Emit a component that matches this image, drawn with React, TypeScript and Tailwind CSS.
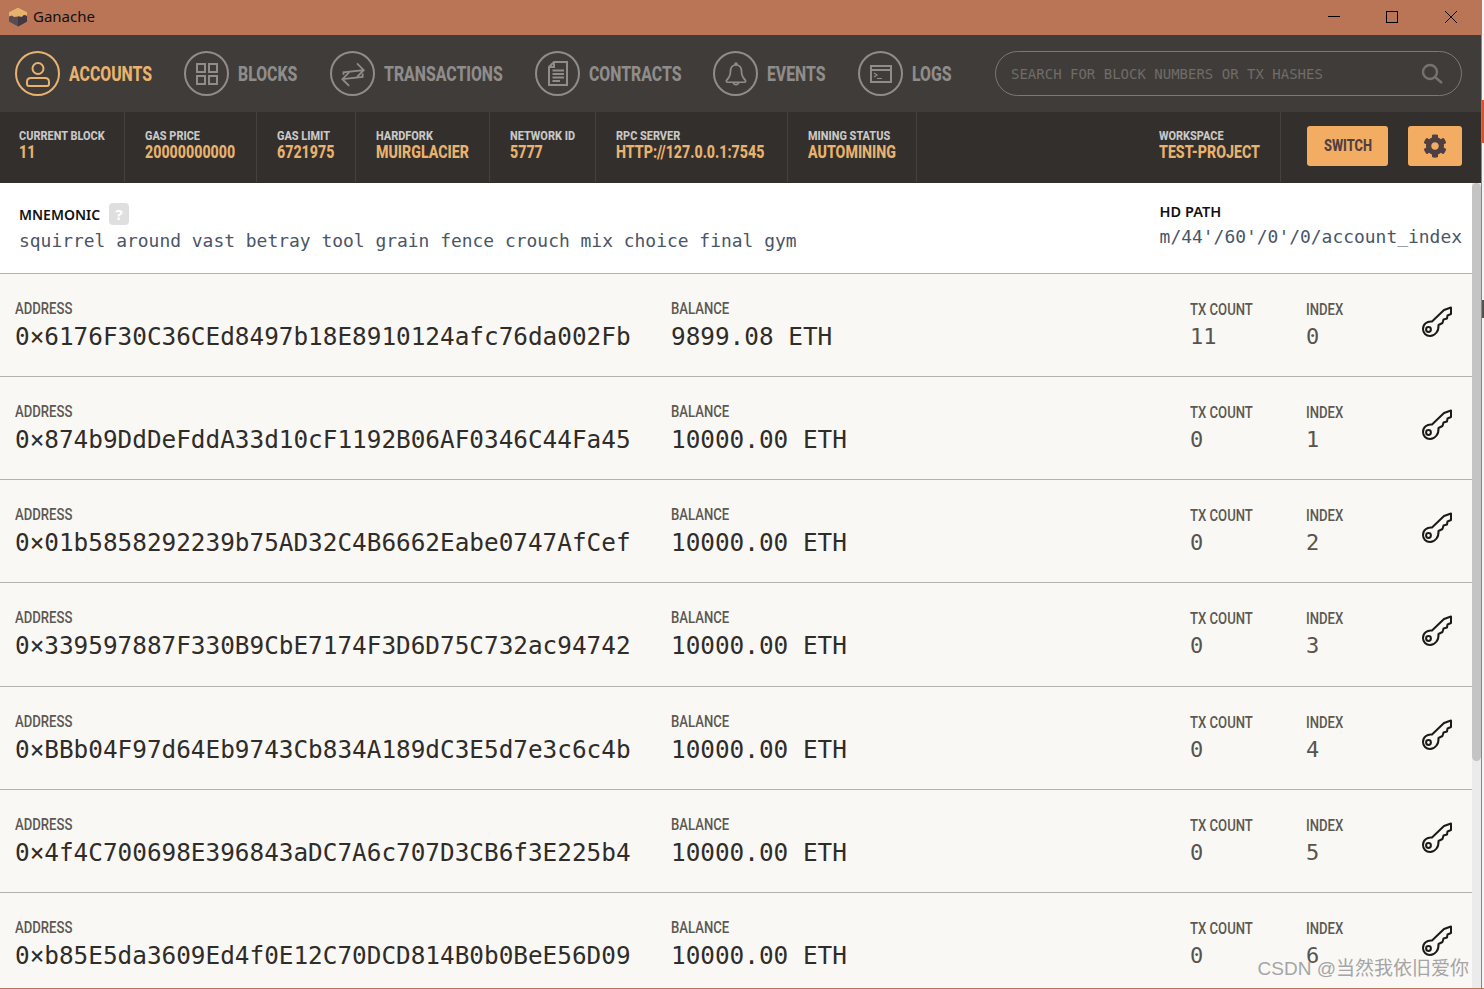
import { FaCog } from "react-icons/fa";

const accounts = [
  { address: "0×6176F30C36CEd8497b18E8910124afc76da002Fb", balance: "9899.08", tx: "11", index: "0" },
  { address: "0×874b9DdDeFddA33d10cF1192B06AF0346C44Fa45", balance: "10000.00", tx: "0", index: "1" },
  { address: "0×01b5858292239b75AD32C4B6662Eabe0747AfCef", balance: "10000.00", tx: "0", index: "2" },
  { address: "0×339597887F330B9CbE7174F3D6D75C732ac94742", balance: "10000.00", tx: "0", index: "3" },
  { address: "0×BBb04F97d64Eb9743Cb834A189dC3E5d7e3c6c4b", balance: "10000.00", tx: "0", index: "4" },
  { address: "0×4f4C700698E396843aDC7A6c707D3CB6f3E225b4", balance: "10000.00", tx: "0", index: "5" },
  { address: "0×b85E5da3609Ed4f0E12C70DCD814B0b0BeE56D09", balance: "10000.00", tx: "0", index: "6" },
];

function UserIcon() {
  return (
    <svg width="24" height="26" viewBox="0 0 24 26" fill="none" stroke="currentColor" strokeWidth="2">
      <circle cx="12" cy="7.5" r="5.5" />
      <path d="M3 25 H21 Q23 25 23 23 V21 Q23 17 19 17 H5 Q1 17 1 21 V23 Q1 25 3 25 Z" />
    </svg>
  );
}

function BlocksIcon() {
  return (
    <svg width="22" height="22" viewBox="0 0 22 22" fill="none" stroke="currentColor" strokeWidth="2">
      <path d="M1 1 H9 V9 H1 Z M13 1 H21 V9 H13 Z M1 13 H9 V21 H1 Z M13 13 H21 V21 H13 Z" />
    </svg>
  );
}

function ArrowsIcon() {
  return (
    <svg width="27" height="27" viewBox="0 0 24 24" fill="none" stroke="currentColor" strokeWidth="1.6">
      <path d="M4 13 V11 L22 9 M16 3 L22 9 L16 15" />
      <path d="M21 12 V15 L3 17 M9 11 L3 17 L9 23" />
    </svg>
  );
}

function ContractIcon() {
  return (
    <svg width="20" height="25" viewBox="0 0 20 25" fill="none" stroke="currentColor" strokeWidth="2">
      <path d="M6 1 H19 V24 H1 V6 Z M1 6 H6 V1" />
      <path d="M4.5 9.5 H16 M4.5 13 H16 M4.5 16.5 H16 M4.5 20 H12" />
    </svg>
  );
}

function BellIcon() {
  return (
    <svg width="22" height="24" viewBox="0 0 24 26" fill="none" stroke="currentColor" strokeWidth="1.9" strokeLinejoin="round">
      <path d="M12 3 C7.5 3 6 7 6 10 C6 15 4.5 17 2 19.5 C1 21 1.5 22 3 22 H21 C22.5 22 23 21 22 19.5 C19.5 17 18 15 18 10 C18 7 16.5 3 12 3 Z" />
      <circle cx="12" cy="2" r="1" fill="currentColor" />
      <path d="M9 22 C9.5 25.5 14.5 25.5 15 22" />
    </svg>
  );
}

function LogIcon() {
  return (
    <svg width="24" height="20" viewBox="0 0 24 20" fill="none" stroke="currentColor" strokeWidth="2">
      <path d="M2 2 H22 V18 H2 Z M2 6 H22" />
      <path d="M5 9 L8 11 L5 13 M8 14.5 H13" strokeWidth="1.2" />
    </svg>
  );
}

function SearchIcon() {
  return (
    <svg width="22" height="22" viewBox="0 0 22 22" fill="none" stroke="#75726f" strokeWidth="2.4">
      <circle cx="9" cy="9" r="7" />
      <path d="M14 14 L21 20" />
    </svg>
  );
}

function KeyIcon() {
  return (
    <svg width="32" height="32" viewBox="0 0 32 32" fill="none" stroke="#1c1a18" strokeWidth="2" strokeLinejoin="round">
      <path d="M11 15.5 L23 4 L30 1.5 V8 L26.5 9.5 L26 12.5 L22.5 13.5 L21.5 17 L17.5 19 C18 25 14 30 9 30 C5 30 2 27 2 23 C2 18 6 15 11 15.5 Z" />
      <circle cx="7.5" cy="23.5" r="2.4" />
    </svg>
  );
}

function GanacheLogo() {
  return (
    <svg width="20" height="20" viewBox="0 0 20 20">
      <path d="M1 5 L10 0.5 L19 5 V14.5 L10 19.5 L1 14.5 Z" fill="#5a4a52" />
      <path d="M1 5 L10 0.5 L19 5 V9 L16 8 L14 10 L10 9.5 L6 10 L4 8.5 L1 9.5 Z" fill="#e9b26c" />
      <path d="M10 9.5 V19.5 L19 14.5 V9 L16 8 L14 10 Z" fill="#43383f" />
    </svg>
  );
}

function NavItem({ label, icon, active, width }: { label: string; icon: React.ReactNode; active?: boolean; width: string }) {
  return (
    <div className={`flex items-center gap-[9px] ${width} ${active ? "text-[#e9b26f]" : "text-[#8f8d8b]"}`}>
      <div className={`flex h-[45px] w-[45px] shrink-0 items-center justify-center rounded-full border-2 ${active ? "border-[#e9b26f]" : "border-[#8f8d8b]"}`}>
        {icon}
      </div>
      <span className="origin-left scale-x-[0.79] text-[20px] font-extrabold whitespace-nowrap [font-family:Roboto,sans-serif]">{label}</span>
    </div>
  );
}

function Stat({ label, value, width }: { label: string; value: string; width: string }) {
  return (
    <div className={`flex h-[70px] flex-col justify-center border-r border-[#45413e] pb-[4px] pl-[20px] ${width}`}>
      <div className="origin-left scale-x-[0.84] text-[13px] leading-[14px] font-extrabold whitespace-nowrap text-[#c9c8c6] [font-family:Roboto,sans-serif]">{label}</div>
      <div className="origin-left scale-x-[0.79] text-[18px] leading-[18px] font-extrabold whitespace-nowrap text-[#e9b26f] [font-family:Roboto,sans-serif]">{value}</div>
    </div>
  );
}

function Label({ children }: { children: React.ReactNode }) {
  return <div className="origin-left scale-x-[0.82] text-[16px] leading-[18px] font-medium whitespace-nowrap text-[#5c5852] [font-family:Roboto,sans-serif]">{children}</div>;
}

function AccountRow({ a }: { a: (typeof accounts)[number] }) {
  return (
    <div className="flex h-[103.15px] shrink-0 items-start border-b border-[#b5b3b0] bg-[#f9f8f5] pt-[26px] pl-[15px]">
      <div className="w-[656px]">
        <Label>ADDRESS</Label>
        <div className="mt-[4px] text-[24.35px] leading-[30px] whitespace-nowrap text-[#2f2c29] [font-family:'DejaVu_Sans_Mono',monospace]">{a.address}</div>
      </div>
      <div className="w-[519px]">
        <Label>BALANCE</Label>
        <div className="mt-[4px] text-[24.35px] leading-[30px] whitespace-nowrap text-[#2f2c29] [font-family:'DejaVu_Sans_Mono',monospace]">{a.balance} ETH</div>
      </div>
      <div className="w-[116px] pt-[1px]">
        <Label>TX COUNT</Label>
        <div className="mt-[4px] text-[22px] leading-[28px] text-[#57534e] [font-family:'DejaVu_Sans_Mono',monospace]">{a.tx}</div>
      </div>
      <div className="w-[116px] pt-[1px]">
        <Label>INDEX</Label>
        <div className="mt-[4px] text-[22px] leading-[28px] text-[#57534e] [font-family:'DejaVu_Sans_Mono',monospace]">{a.index}</div>
      </div>
      <div className="-ml-[1px] pt-[6px]">
        <KeyIcon />
      </div>
    </div>
  );
}

export default function App() {
  return (
    <div className="relative flex h-[989px] w-[1484px] flex-col overflow-hidden bg-white">
      {/* title bar */}
      <div className="flex h-[35px] shrink-0 items-center bg-[#b97556] pb-[2px] pl-[8px]">
        <GanacheLogo />
        <span className="ml-[5px] text-[15px] text-[#111] [font-family:'Noto_Sans',sans-serif]">Ganache</span>
        <div className="ml-auto flex items-center pr-[27px] text-black">
          <div className="h-px w-[12px] bg-black" />
          <div className="ml-[46px] h-[12px] w-[12px] border border-black" />
          <svg className="ml-[47px]" width="12" height="12" viewBox="0 0 12 12" stroke="black" strokeWidth="1"><path d="M0 0 L12 12 M12 0 L0 12" /></svg>
        </div>
      </div>

      {/* nav */}
      <div className="flex h-[77px] shrink-0 items-center bg-[#403c39] pr-[22px] pl-[15px]">
        <NavItem active width="w-[169px]" label="ACCOUNTS" icon={<UserIcon />} />
        <NavItem width="w-[146px]" label="BLOCKS" icon={<BlocksIcon />} />
        <NavItem width="w-[205px]" label="TRANSACTIONS" icon={<ArrowsIcon />} />
        <NavItem width="w-[178px]" label="CONTRACTS" icon={<ContractIcon />} />
        <NavItem width="w-[145px]" label="EVENTS" icon={<BellIcon />} />
        <NavItem width="w-[137px]" label="LOGS" icon={<LogIcon />} />
        <div className="flex h-[45px] w-[467px] items-center justify-between rounded-full border border-[#7b7875] pr-[18px] pl-[15px]">
          <span className="pt-[1px] text-[14px] whitespace-nowrap text-[#6f6c69] [font-family:'DejaVu_Sans_Mono',monospace]">SEARCH FOR BLOCK NUMBERS OR TX HASHES</span>
          <SearchIcon />
        </div>
      </div>

      {/* stats */}
      <div className="flex h-[71px] shrink-0 bg-[#332f2c]">
        <Stat width="w-[125px] !pl-[19px]" label="CURRENT BLOCK" value="11" />
        <Stat width="w-[132px]" label="GAS PRICE" value="20000000000" />
        <Stat width="w-[99px]" label="GAS LIMIT" value="6721975" />
        <Stat width="w-[134px]" label="HARDFORK" value="MUIRGLACIER" />
        <Stat width="w-[106px]" label="NETWORK ID" value="5777" />
        <Stat width="w-[192px]" label="RPC SERVER" value="HTTP://127.0.0.1:7545" />
        <Stat width="w-[129px]" label="MINING STATUS" value="AUTOMINING" />
        <div className="flex-1" />
        <Stat width="w-[142px]" label="WORKSPACE" value="TEST-PROJECT" />
        <div className="flex items-center pr-[22px] pb-[3px] pl-[26px]">
          <div className="flex h-[40px] w-[81px] items-center justify-center rounded-[3px] bg-[#f2ad63] text-[16px] font-extrabold text-[#4f3f42] [font-family:Roboto,sans-serif]">
            <span className="scale-x-[0.8]">SWITCH</span>
          </div>
          <div className="ml-[20px] flex h-[40px] w-[54px] items-center justify-center rounded-[3px] bg-[#f2ad63] text-[#4f3f42]">
            <FaCog size={24} />
          </div>
        </div>
      </div>

      {/* mnemonic */}
      <div className="flex h-[91px] shrink-0 justify-between border-b border-[#b5b3b0] bg-white pr-[22px] pl-[19px]">
        <div className="pt-[20px]">
          <div className="flex items-center gap-[9px]">
            <span className="text-[14px] font-semibold text-[#111] [font-family:'Noto_Sans',sans-serif]">MNEMONIC</span>
            <span className="flex h-[22px] w-[20px] items-center justify-center rounded-[4px] bg-[#dfdfdf] text-[15px] font-bold text-white [font-family:'Noto_Sans',sans-serif]">?</span>
          </div>
          <div className="mt-[3px] text-[17.95px] leading-[26px] whitespace-nowrap text-[#4a5568] [font-family:'DejaVu_Sans_Mono',monospace]">squirrel around vast betray tool grain fence crouch mix choice final gym</div>
        </div>
        <div className="pt-[18px]">
          <div className="text-[14.5px] font-semibold text-[#111] [font-family:'Noto_Sans',sans-serif]">HD PATH</div>
          <div className="mt-[1px] text-[17.95px] leading-[26px] whitespace-nowrap text-[#4a5568] [font-family:'DejaVu_Sans_Mono',monospace]">m/44'/60'/0'/0/account_index</div>
        </div>
      </div>

      {/* accounts */}
      <div className="flex flex-1 flex-col overflow-hidden">
        {accounts.map((a) => (
          <AccountRow key={a.address} a={a} />
        ))}
      </div>

      {/* window scrollbar + edge */}
      <div className="absolute top-[183px] right-[3px] bottom-0 w-[9px] bg-[#ebebeb]">
        <div className="h-[578px] w-full rounded-[5px] bg-[#c4c4c4]" />
      </div>
      <div className="absolute top-0 right-0 bottom-0 w-[3px] border-l border-[#b97556] bg-[#f4f4f4]" />
      <div className="absolute top-[100px] right-0 h-[43px] w-[2px] bg-[#d9532f]" />
      <div className="absolute top-[300px] right-0 h-[18px] w-[2px] bg-[#55524f]" />
      <div className="absolute right-0 bottom-0 left-0 h-px bg-[#b97556]" />

      {/* watermark */}
      <div className="absolute right-[15px] bottom-[6px] text-[19px] text-[#a5a5a5] [font-family:'Liberation_Sans','Noto_Sans_CJK_SC',sans-serif]">CSDN @当然我依旧爱你</div>
    </div>
  );
}
